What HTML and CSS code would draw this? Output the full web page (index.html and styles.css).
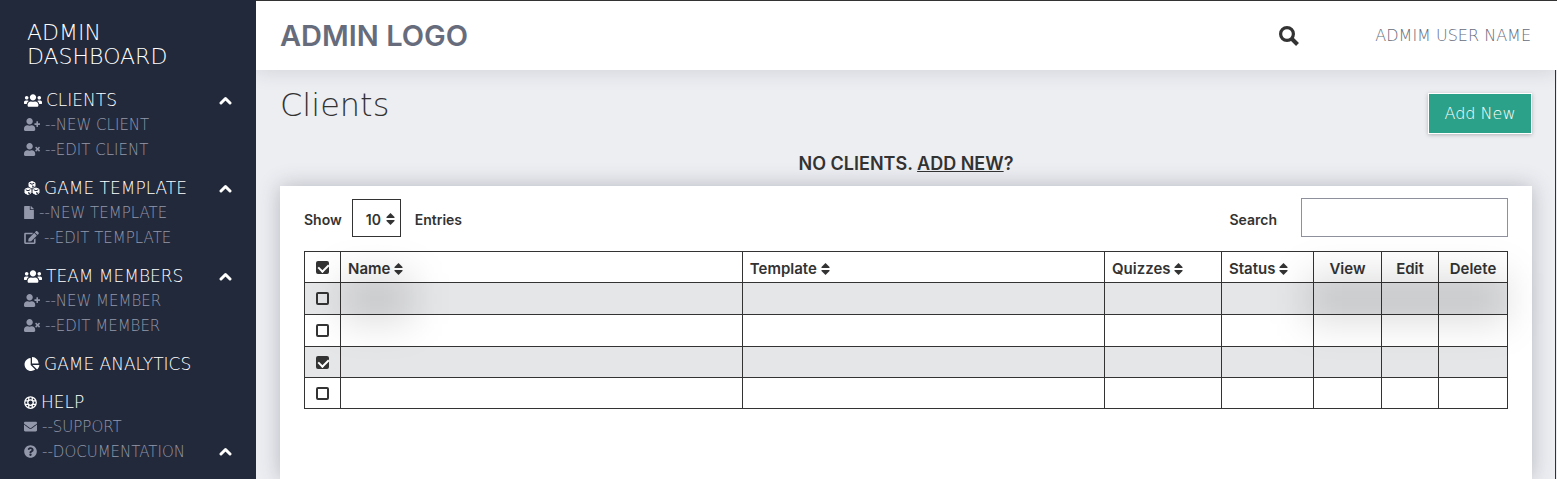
FILE: index.html
```html
<!DOCTYPE html>
<html lang="en">
<head>
<meta charset="utf-8">
<meta name="viewport" content="width=device-width, initial-scale=1">
<title>Admin Dashboard</title>
<link rel="stylesheet" href="styles.css">
</head>
<body>
<svg class="sprite" aria-hidden="true">
  <symbol id="users" viewBox="0 0 640 512"><path d="M96 224c35.300 0 64-28.700 64-64s-28.700-64-64-64-64 28.700-64 64 28.700 64 64 64zm448 0c35.300 0 64-28.700 64-64s-28.700-64-64-64-64 28.700-64 64 28.700 64 64 64zm32 32h-64c-17.600 0-33.500 7.100-45.100 18.600 40.300 22.100 68.900 62 75.100 109.400h66c17.700 0 32-14.300 32-32v-32c0-35.300-28.700-64-64-64zm-256 0c61.900 0 112-50.100 112-112S381.900 32 320 32 208 82.100 208 144s50.100 112 112 112zm76.800 32h-8.300c-20.800 10-43.900 16-68.500 16s-47.600-6-68.500-16h-8.300C179.600 288 128 339.600 128 403.200V432c0 26.500 21.500 48 48 48h288c26.500 0 48-21.500 48-48v-28.800c0-63.600-51.600-115.200-115.200-115.200zm-223.700-13.400C161.500 263.100 145.600 256 128 256H64c-35.300 0-64 28.700-64 64v32c0 17.700 14.300 32 32 32h65.900c6.300-47.400 34.900-87.300 75.200-109.400z"/></symbol>
  <symbol id="user-plus" viewBox="0 0 640 512"><path d="M624 208h-64v-64c0-8.800-7.200-16-16-16h-32c-8.800 0-16 7.200-16 16v64h-64c-8.800 0-16 7.200-16 16v32c0 8.800 7.200 16 16 16h64v64c0 8.800 7.200 16 16 16h32c8.800 0 16-7.200 16-16v-64h64c8.800 0 16-7.200 16-16v-32c0-8.800-7.200-16-16-16zm-400 48c70.700 0 128-57.300 128-128S294.700 0 224 0 96 57.300 96 128s57.300 128 128 128zm89.600 32h-16.700c-22.200 10.200-46.900 16-72.900 16s-50.600-5.800-72.900-16h-16.700C60.200 288 0 348.200 0 422.400V464c0 26.500 21.500 48 48 48h352c26.500 0 48-21.500 48-48v-41.600c0-74.200-60.200-134.400-134.400-134.400z"/></symbol>
  <symbol id="user-times" viewBox="0 0 640 512"><path d="M589.600 240l45.600-45.600c6.300-6.300 6.300-16.500 0-22.800l-22.800-22.800c-6.300-6.300-16.500-6.300-22.800 0L544 194.400l-45.600-45.600c-6.300-6.300-16.500-6.300-22.800 0l-22.800 22.800c-6.300 6.300-6.300 16.500 0 22.800l45.600 45.600-45.600 45.600c-6.300 6.300-6.300 16.500 0 22.800l22.800 22.800c6.300 6.300 16.500 6.300 22.800 0l45.600-45.600 45.600 45.600c6.300 6.300 16.500 6.300 22.800 0l22.800-22.800c6.300-6.300 6.300-16.500 0-22.800L589.600 240zM224 256c70.700 0 128-57.300 128-128S294.700 0 224 0 96 57.300 96 128s57.300 128 128 128zm89.600 32h-16.700c-22.200 10.200-46.900 16-72.900 16s-50.600-5.800-72.900-16h-16.700C60.200 288 0 348.200 0 422.400V464c0 26.500 21.500 48 48 48h352c26.500 0 48-21.500 48-48v-41.600c0-74.200-60.200-134.400-134.400-134.400z"/></symbol>
  <symbol id="cubes" viewBox="0 0 30 28"><g stroke-linejoin="round" stroke-width="2" stroke="currentColor"><path d="M15 1l6 2.500v7.500L15 14l-6-3V3.500z"/><path d="M7 14l6 2.500V24l-6 3-6-3v-7.500z"/><path d="M23 14l6 2.500V24l-6 3-6-3v-7.500z"/></g><path class="cube-cut" d="M10.500 4.500L15 6.500l4.500-2M2.500 17.500l4.500 2 4.500-2M18.500 17.500l4.500 2 4.500-2M16.500 9v3.500l3-1.500M8.500 22v3.500l3-1.500M24.500 22v3.500l3-1.500"/></symbol>
  <symbol id="file" viewBox="0 0 384 512"><path d="M224 136V0H24C10.700 0 0 10.700 0 24v464c0 13.300 10.700 24 24 24h336c13.300 0 24-10.700 24-24V160H248c-13.200 0-24-10.800-24-24zm160-14.100v6.100H256V0h6.100c6.400 0 12.500 2.500 17 7l97.900 98c4.500 4.500 7 10.600 7 16.900z"/></symbol>
  <symbol id="edit" viewBox="0 0 576 512"><path d="M402.600 83.200l90.200 90.200c3.800 3.800 3.800 10 0 13.800L274.400 405.600l-92.800 10.300c-12.400 1.400-22.900-9.100-21.500-21.500l10.300-92.800L388.800 83.200c3.800-3.800 10-3.800 13.800 0zm162-22.900l-48.800-48.800c-15.200-15.200-39.900-15.200-55.200 0l-35.400 35.400c-3.800 3.800-3.800 10 0 13.800l90.200 90.200c3.800 3.800 10 3.800 13.800 0l35.400-35.400c15.200-15.300 15.200-40 0-55.200zM384 346.200V448H64V128h229.800c3.200 0 6.200-1.300 8.500-3.500l40-40c7.600-7.600 2.200-20.500-8.500-20.500H48C21.500 64 0 85.500 0 112v352c0 26.500 21.500 48 48 48h352c26.500 0 48-21.500 48-48V306.200c0-10.700-12.900-16-20.500-8.500l-40 40c-2.200 2.300-3.500 5.300-3.500 8.500z"/></symbol>
  <symbol id="pie" viewBox="0 0 544 512"><path d="M527.790 288H290.500l158.030 158.030c6.040 6.040 15.980 6.530 22.190.68 38.700-36.460 65.320-85.610 73.130-140.860 1.340-9.460-6.510-17.850-16.060-17.850zm-15.830-64.800C503.720 103.740 408.260 8.280 288.800.04 279.680-.59 272 7.100 272 16.240V240h223.770c9.140 0 16.820-7.680 16.190-16.800zM224 288V50.710c0-9.550-8.390-17.400-17.840-16.060C86.990 51.490-4.100 155.600.14 280.370 4.500 408.510 114.830 513.590 243.030 511.980c50.400-.63 96.970-16.870 135.260-44.030 7.900-5.600 8.420-17.230 1.570-24.080L224 288z"/></symbol>
  <symbol id="ring" viewBox="0 0 26 26"><g fill="none" stroke="currentColor"><circle cx="13" cy="13" r="11.500" stroke-width="2.500"/><circle cx="13" cy="13" r="5.500" stroke-width="2.500"/><path stroke-width="2.500" d="M9.500 2v7M16.500 2v7M9.500 17v7M16.500 17v7M2 9.500h7M2 16.500h7M17 9.500h7M17 16.500h7"/></g></symbol>
  <symbol id="mail" viewBox="0 0 512 512"><path d="M502.300 190.800c3.900-3.100 9.700-.2 9.700 4.700V400c0 26.500-21.500 48-48 48H48c-26.500 0-48-21.500-48-48V195.600c0-5 5.700-7.800 9.700-4.700 22.400 17.400 52.100 39.500 154.100 113.600 21.100 15.400 56.700 47.800 92.200 47.600 35.700.3 72-32.800 92.300-47.600 102-74.100 131.600-96.300 154-113.700zM256 320c23.200.4 56.600-29.200 73.400-41.400 132.700-96.300 142.800-104.700 173.400-128.700 5.800-4.500 9.200-11.500 9.200-18.900v-19c0-26.500-21.500-48-48-48H48c-26.500 0-48 21.500-48 48v19c0 7.400 3.400 14.300 9.200 18.900 30.600 23.900 40.700 32.400 173.400 128.700 16.800 12.200 50.200 41.800 73.400 41.400z"/></symbol>
  <symbol id="question" viewBox="0 0 512 512"><path d="M504 256c0 137-111 248-248 248S8 393 8 256C8 119.100 119 8 256 8s248 111.100 248 248zM262.700 90c-54.500 0-89.300 23-116.600 63.800-3.500 5.300-2.400 12.400 2.700 16.200l34.700 26.300c5.200 4 12.600 3 16.700-2.100 17.900-22.700 30.100-35.800 57.300-35.800 20.400 0 45.700 13.100 45.700 33 0 15-12.400 22.600-32.500 33.900C247.100 238.500 216 254.900 216 296v4c0 6.600 5.400 12 12 12h56c6.600 0 12-5.400 12-12v-1.300c0-28.500 83.200-29.700 83.200-106.700 0-58-60.200-102-116.500-102zM256 338c-25.400 0-46 20.600-46 46s20.600 46 46 46 46-20.600 46-46-20.600-46-46-46z"/></symbol>
  <symbol id="up" viewBox="0 0 26 18"><path fill="none" stroke="currentColor" stroke-width="6" stroke-linecap="round" stroke-linejoin="round" d="M4 14l9-9 9 9"/></symbol>
  <symbol id="sort" viewBox="0 0 18 24"><path d="M9 0l8 8q1 2-1 2H2q-2 0-1-2zM9 24l8-8q1-2-1-2H2q-2 0-1 2z"/></symbol>
  <symbol id="search" viewBox="0 0 20 20"><path fill="none" stroke="currentColor" stroke-width="4" d="M12.500 12.500l6 6"/><circle cx="8" cy="8" r="6.400" fill="none" stroke="currentColor" stroke-width="3.200"/></symbol>
</svg>

<div class="layout">
  <aside class="sidebar">
    <h1 class="brand">ADMIN<br>DASHBOARD</h1>
    <nav>
      <section class="group">
        <div class="row head"><a href="#clients"><svg class="i-wide"><use href="#users"/></svg>CLIENTS</a><button class="toggle" aria-label="Collapse clients"><svg class="i-up"><use href="#up"/></svg></button></div>
        <div class="row"><a href="#new-client"><svg class="i-user"><use href="#user-plus"/></svg>--NEW CLIENT</a></div>
        <div class="row"><a href="#edit-client"><svg class="i-user"><use href="#user-times"/></svg>--EDIT CLIENT</a></div>
      </section>
      <section class="group">
        <div class="row head"><a href="#templates"><svg class="i-mid"><use href="#cubes"/></svg>GAME TEMPLATE</a><button class="toggle" aria-label="Collapse game template"><svg class="i-up"><use href="#up"/></svg></button></div>
        <div class="row"><a href="#new-template"><svg class="i-file"><use href="#file"/></svg>--NEW TEMPLATE</a></div>
        <div class="row"><a href="#edit-template"><svg class="i-edit"><use href="#edit"/></svg>--EDIT TEMPLATE</a></div>
      </section>
      <section class="group">
        <div class="row head"><a href="#members"><svg class="i-wide"><use href="#users"/></svg>TEAM MEMBERS</a><button class="toggle" aria-label="Collapse team members"><svg class="i-up"><use href="#up"/></svg></button></div>
        <div class="row"><a href="#new-member"><svg class="i-user"><use href="#user-plus"/></svg>--NEW MEMBER</a></div>
        <div class="row"><a href="#edit-member"><svg class="i-user"><use href="#user-times"/></svg>--EDIT MEMBER</a></div>
      </section>
      <section class="group">
        <div class="row head"><a href="#analytics"><svg class="i-mid"><use href="#pie"/></svg>GAME ANALYTICS</a></div>
      </section>
      <section class="group">
        <div class="row head"><a href="#help"><svg class="i-small"><use href="#ring"/></svg>HELP</a></div>
        <div class="row"><a href="#support"><svg class="i-small"><use href="#mail"/></svg>--SUPPORT</a></div>
        <div class="row"><a href="#docs"><svg class="i-small"><use href="#question"/></svg>--DOCUMENTATION</a><button class="toggle" aria-label="Collapse help"><svg class="i-up"><use href="#up"/></svg></button></div>
      </section>
    </nav>
  </aside>

  <div class="page">
    <header class="topbar">
      <a class="logo" href="#home">ADMIN LOGO</a>
      <button class="search-btn" aria-label="Search"><svg class="i-search"><use href="#search"/></svg></button>
      <span class="user">ADMIM USER NAME</span>
    </header>
    <main class="content">
      <div class="title-row">
        <h2 class="title">Clients</h2>
        <button class="add">Add New</button>
      </div>
      <p class="notice">NO CLIENTS. <a href="#new-client">ADD NEW</a>?</p>
      <section class="card">
        <div class="tools">
          <label for="count">Show</label>
          <span class="select-box"><select id="count"><option>10</option><option>25</option></select><svg class="i-sort"><use href="#sort"/></svg></span>
          <span class="entries">Entries</span>
          <label class="search-label" for="query">Search</label>
          <input class="query" id="query" type="text">
        </div>
        <table class="clients">
          <colgroup><col class="c-check"><col class="c-name"><col><col class="c-quiz"><col class="c-status"><col class="c-view"><col class="c-edit"><col class="c-delete"></colgroup>
          <thead>
            <tr>
              <th class="check"><input type="checkbox" aria-label="Select all" checked></th>
              <th>Name <svg class="i-sort"><use href="#sort"/></svg></th>
              <th>Template <svg class="i-sort"><use href="#sort"/></svg></th>
              <th>Quizzes <svg class="i-sort"><use href="#sort"/></svg></th>
              <th>Status <svg class="i-sort"><use href="#sort"/></svg></th>
              <th class="action">View</th><th class="action">Edit</th><th class="action">Delete</th>
            </tr>
          </thead>
          <tbody>
            <tr><td class="check"><input type="checkbox" aria-label="Select row 1"></td><td class="shade shade-name"></td><td></td><td></td><td></td><td></td><td class="shade shade-actions"></td><td></td></tr>
            <tr><td class="check"><input type="checkbox" aria-label="Select row 2"></td><td></td><td></td><td></td><td></td><td></td><td></td><td></td></tr>
            <tr><td class="check"><input type="checkbox" aria-label="Select row 3" checked></td><td></td><td></td><td></td><td></td><td></td><td></td><td></td></tr>
            <tr><td class="check"><input type="checkbox" aria-label="Select row 4"></td><td></td><td></td><td></td><td></td><td></td><td></td><td></td></tr>
          </tbody>
        </table>
      </section>
    </main>
  </div>
</div>
</body>
</html>
```
FILE: styles.css
```css
* { box-sizing: border-box; }

body {
  margin: 0;
  color: #333;
  background: #edeef2;
  font: 600 14px/20px Inter, "Open Sans", sans-serif;
}

button, input, select { font: inherit; color: inherit; }
button { padding: 0; border: 0; background: none; cursor: pointer; }
a { color: inherit; }
svg { display: block; flex: none; fill: currentColor; }
.sprite { position: absolute; width: 0; height: 0; }

.layout { display: flex; min-height: 100vh; }

.sidebar {
  flex: none;
  width: 256px;
  padding: 21px 24px 13px;
  color: #fff;
  background: #22293b;
  font-family: "DejaVu Sans", sans-serif;
  font-weight: 200;
}
.brand { margin: 0 0 19px; padding-left: 3px; font-size: 22px; font-weight: 200; line-height: 24px; }
.group { margin-bottom: 14px; }
.group:last-child { margin-bottom: 0; }
.row { display: flex; align-items: center; justify-content: space-between; height: 25px; color: #9398aa; font-size: 15px; }
.row.head { height: 24px; color: #fff; font-size: 17px; }
.row a { display: flex; align-items: center; gap: 5px; text-decoration: none; white-space: nowrap; }
.row.head a { gap: 4px; }
.toggle { color: #fff; }

.i-wide { width: 18px; height: 15px; }
.i-user { width: 16px; height: 13px; }
.i-mid { width: 16px; height: 14px; }
.i-file { width: 10px; height: 13px; }
.i-edit { width: 15px; height: 13px; }
.i-small { width: 13px; height: 13px; }
.i-up { width: 13px; height: 9px; }
.i-search { width: 20px; height: 20px; }
.i-sort { display: inline-block; width: 9px; height: 12px; }
.cube-cut { fill: none; stroke: #22293b; stroke-width: 2; }

.page { display: flex; flex: 1; flex-direction: column; min-width: 0; border-top: 1px solid #333; }

.topbar {
  position: relative;
  display: flex;
  align-items: center;
  height: 69px;
  padding: 0 26px 0 24px;
  background: #fff;
  box-shadow: 0 0 20px rgba(40, 45, 60, .16);
  clip-path: inset(0 0 -30px 0);
}
.logo { flex: 1; color: #676c7c; font-size: 29px; line-height: 36px; text-decoration: none; }
.search-btn { margin-right: 76px; }
.user { color: #676c7c; font: 200 16px/20px "DejaVu Sans", sans-serif; }

.content { display: flex; flex: 1; flex-direction: column; padding: 17px 23px 0 24px; border-right: 1px solid #333; margin-right: 1px; overflow: hidden; }
.title-row { display: flex; align-items: flex-start; justify-content: space-between; }
.title { margin: 0; font: 200 32px/36px "DejaVu Sans", sans-serif; }
.add {
  width: 104px;
  height: 41px;
  margin-top: 6px;
  border: 1px solid #fff;
  color: #fff;
  background: #2ca189;
  box-shadow: 0 1px 4px rgba(0, 0, 0, .25);
  font: 200 16px/20px "DejaVu Sans", sans-serif;
}
.notice { margin: 18px 0 10px; font-size: 18px; line-height: 24px; text-align: center; }

.card { flex: 1; padding: 12px 24px 68px; background: #fff; box-shadow: 0 0 20px rgba(50, 60, 80, .3); }
.tools { display: flex; align-items: center; margin-bottom: 14px; }
.tools label, .entries { padding-top: 4px; }
.select-box { position: relative; margin: 0 14px 0 10px; }
.select-box select { display: block; width: 49px; height: 38px; padding: 4px 0 0 13px; border: 1px solid #333; border-radius: 0; background: #fff; appearance: none; }
.select-box .i-sort { position: absolute; top: 14px; right: 6px; pointer-events: none; }
.search-label { margin: 0 24px 0 auto; }
.query { width: 207px; height: 39px; padding: 0 10px; border: 1px solid #8e919c; border-radius: 0; background: #fff; }

.clients { width: 100%; border-collapse: collapse; table-layout: fixed; }
.c-check { width: 36px; }
.c-name { width: 33.4%; }
.c-quiz { width: 117px; }
.c-status { width: 92px; }
.c-view { width: 68px; }
.c-edit { width: 57px; }
.c-delete { width: 69px; }
.clients th, .clients td { height: 32px; padding: 0 7px; border: 1px solid #333; text-align: left; white-space: nowrap; }
.clients th { height: 31px; padding: 4px 7px 0; font-size: 15px; font-weight: 600; }
.clients tbody tr:nth-child(n+3) td { height: 31px; }
.clients th .i-sort { vertical-align: -1px; }
.clients .check { padding: 0; }
.clients .action { padding: 4px 0 0; text-align: center; }
.clients tbody tr:nth-child(odd) { background: #e5e6e8; }

.clients input { position: relative; display: block; width: 13px; height: 13px; margin: 0 auto; border: 2px solid #333; border-radius: 2px; appearance: none; }
.clients input:checked { background: #333; }
.clients input:checked::after { content: ""; position: absolute; top: -1px; left: 2px; width: 5px; height: 8px; border: solid #fff; border-width: 0 2px 2px 0; transform: rotate(45deg); }

.shade { position: relative; }
.shade::after { content: ""; position: absolute; top: -10px; bottom: -10px; border-radius: 4px; background: rgba(0, 0, 0, .12); filter: blur(18px); pointer-events: none; }
.shade-name::after { left: 0; width: 72px; }
.shade-actions::after { left: -76px; right: -70px; }
```
